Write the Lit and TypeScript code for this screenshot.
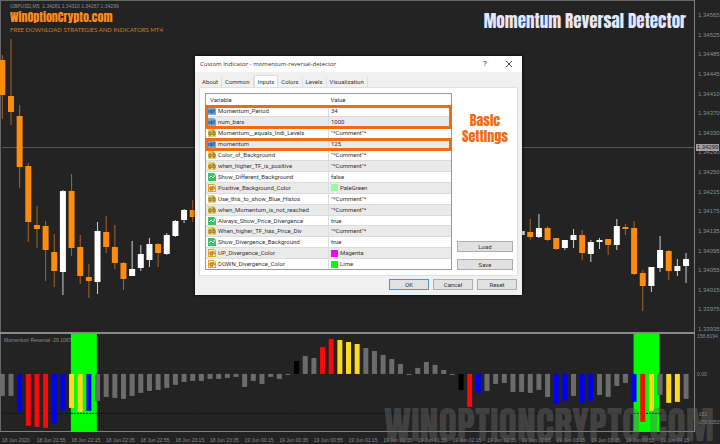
import { LitElement, html, svg, css } from "lit";
import { customElement } from "lit/decorators.js";

type Candle = [number, number, number, number, number, "o" | "w"];

// index, wick top, body top, body bottom, wick bottom, colour
const CANDLES: Candle[] = [
  [0, 55, 60, 95, 119, "o"], [1, 39, 96, 112, 125, "o"], [2, 105, 116, 167, 188, "o"],
  [3, 163, 166, 222, 242, "o"], [4, 206, 225, 229, 248, "o"], [5, 221, 226, 250, 281, "o"],
  [6, 234, 252, 271, 287, "o"], [7, 190, 191, 272, 295, "w"], [8, 174, 191, 248, 256, "o"],
  [9, 235, 247, 276, 284, "o"], [10, 264, 277, 281, 298, "o"], [11, 222, 231, 282, 294, "w"],
  [12, 216, 232, 247, 253, "o"], [13, 225, 247, 263, 269, "o"], [14, 262, 263, 279, 290, "o"],
  [15, 241, 269, 276, 276, "w"], [16, 245, 254, 268, 271, "w"], [17, 238, 244, 260, 267, "w"],
  [18, 243, 244, 253, 267, "o"], [19, 233, 235, 254, 255, "w"], [20, 220, 221, 236, 237, "w"],
  [21, 209, 210, 220, 223, "w"], [22, 200, 210, 217, 222, "o"],
  [60, 231, 231, 235, 235, "w"], [61, 219, 232, 237, 240, "o"], [62, 214, 228, 237, 238, "w"],
  [63, 226, 228, 240, 241, "o"], [64, 238, 238, 249, 250, "o"], [65, 240, 240, 248, 250, "w"],
  [66, 229, 235, 240, 248, "w"], [67, 230, 235, 253, 260, "o"], [68, 240, 242, 254, 262, "w"],
  [69, 238, 240, 242, 249, "w"], [70, 239, 239, 245, 255, "o"], [71, 219, 226, 245, 250, "w"],
  [72, 224, 227, 229, 235, "o"], [73, 221, 228, 274, 275, "o"], [74, 270, 273, 286, 311, "o"],
  [75, 267, 267, 286, 292, "w"], [76, 236, 250, 268, 272, "w"], [77, 250, 251, 271, 280, "o"],
  [78, 259, 266, 271, 276, "w"], [79, 253, 259, 266, 283, "w"],
];

// histogram heights, positive is below the zero line
const HISTO =
  "g22 g22 b38 r52 r53 r54 b50 b37 y34 y38 b37 g27 g23 g24 g25 g22 g19 g17 g16 g14 g11 g8 g7 g7 g5 g5 g4 g3 g13 g7 g10 g3 g5 g1 k-13 g-18 g-16 r-27 r-35 y-34 y-32 y-30 g-26 g-23 g-19 g-15 g-10 g1 g-6 g-12 g-9 g-4 g1 k16 r33 b19 g17 g10 g9 g18 g18 g19 g16 g23 b30 b27 g22 b29 b27 g21 g23 g12 g9 b28 r48 y37 g21 y29 y28 g25"
    .split(" ");

const PRICES = "1.34565 1.34525 1.34485 1.34445 1.34410 1.34370 1.34330 1.34290 1.34250 1.34215 1.34175 1.34135 1.34095 1.34055 1.34015 1.33975 1.33935".split(" ");

const TIMES = [
  "18 Jun 2020", "18 Jun 21:55", "18 Jun 22:15", "18 Jun 22:35", "18 Jun 22:55",
  "18 Jun 23:15", "18 Jun 23:35", "19 Jun 00:15", "19 Jun 00:35", "19 Jun 00:55",
  "19 Jun 01:15", "19 Jun 01:35", "19 Jun 01:55", "19 Jun 02:15", "19 Jun 02:35",
  "19 Jun 02:55", "19 Jun 03:15", "19 Jun 03:35", "19 Jun 03:55", "19 Jun 04:15",
];

const barX = (i: number) => 11 + (i - 1) * 8.667;

@customElement("price-chart")
export class PriceChart extends LitElement {
  static styles = css`
    :host { display: block; }
    svg { display: block; width: 100%; height: 100%; }
    .o { fill: #ff8c0a; }
    .w { fill: #ffffff; }
    .wick.o { fill: #a8642a; }
    .wick.w { fill: #d0d0d0; }
    .level { fill: #585858; }
  `;
  render() {
    return html`<svg viewBox="0 0 695 332" preserveAspectRatio="none" aria-hidden="true">
      <rect class="level" x="2" y="147" width="693" height="1"></rect>
      ${CANDLES.map(([i, wt, bt, bb, wb, c]) => {
        const x = barX(i);
        return svg`<rect class="wick ${c}" x=${x - 0.5} y=${wt} width="1" height=${wb - wt}></rect>
          <rect class=${c} x=${x - 3} y=${bt} width="6" height=${bb - bt}></rect>`;
      })}
    </svg>`;
  }
}

@customElement("momentum-chart")
export class MomentumChart extends LitElement {
  static styles = css`
    :host { display: block; }
    svg { display: block; width: 100%; height: 100%; }
    .g { fill: #6c6c6c; }
    .b { fill: #0000f5; }
    .r { fill: #fa0a0a; }
    .y { fill: #ffd91a; }
    .k { fill: #000000; }
    .zone { fill: #00ff00; }
    .dots { stroke: #111111; stroke-width: 1; stroke-dasharray: 2 1; }
  `;
  render() {
    return html`<svg viewBox="0 0 695 98" preserveAspectRatio="none" aria-hidden="true">
      <rect class="zone" x="71" y="0" width="26" height="98"></rect>
      <rect class="zone" x="634.5" y="0" width="26" height="98"></rect>
      <line class="dots" x1="2" x2="695" y1="79.5" y2="79.5"></line>
      ${HISTO.map((d, i) => {
        const v = Number(d.slice(1));
        return svg`<rect class=${d[0]} x=${barX(i) - 2.5} y=${40 + Math.min(v, 0)} width="5" height=${Math.abs(v)}></rect>`;
      })}
    </svg>`;
  }
}

type Kind = "int" | "str" | "bool" | "color";
type Row = [Kind, string, string, string?];

const GROUPS: { marked: boolean; rows: Row[] }[] = [
  { marked: true, rows: [["int", "Momentum_Period", "34"], ["int", "num_bars", "1000"]] },
  { marked: false, rows: [["str", "Momentum__equals_Indi_Levels", '"*Comment"*']] },
  { marked: true, rows: [["int", "momentum", "125"]] },
  {
    marked: false,
    rows: [
      ["str", "Color_of_Background", '"*Comment"*'],
      ["str", "when_higher_TF_is_positive", '"*Comment"*'],
      ["bool", "Show_Different_Background", "false"],
      ["color", "Positive_Background_Color", "PaleGreen", "#98fb98"],
      ["str", "Use_this_to_show_Blue_Histos", '"*Comment"*'],
      ["str", "when_Momentum_is_not_reached", '"*Comment"*'],
      ["bool", "Always_Show_Price_Divergence", "true"],
      ["str", "When_higher_TF_has_Price_Div", '"*Comment"*'],
      ["bool", "Show_Divergence_Background", "true"],
      ["color", "UP_Divergence_Color", "Magenta", "#ff00ff"],
      ["color", "DOWN_Divergence_Color", "Lime", "#00ff00"],
    ],
  },
];

@customElement("settings-dialog")
export class SettingsDialog extends LitElement {
  static styles = css`
    :host {
      display: block;
      box-sizing: border-box;
      background: #f0f0f0;
      color: #333;
      font: 6px/8px Roboto, "Liberation Sans", sans-serif;
      box-shadow: 0 0 3px #000;
    }
    button { font: inherit; color: inherit; margin: 0; padding: 0; border: 0; background: none; }
    .title { display: flex; align-items: center; height: 16px; padding: 0 5px; background: #fff; }
    .title h2 { flex: 1; margin: 0; font: 6px/8px "Open Sans", sans-serif; }
    .title button { width: 24px; height: 16px; display: grid; place-items: center; font-size: 8px; }
    .title button:last-child { margin-right: -4px; }
    .close { width: 6px; height: 6px; stroke: #444; fill: none; }
    .tabs { display: flex; align-items: flex-end; height: 15px; padding: 0 4px; }
    .tabs button { height: 10px; padding: 0 3px; border-right: 1px solid #ddd; }
    .tabs .active { height: 12px; background: #fff; border: 1px solid #ddd; border-bottom: 0; }
    .panel { display: flex; margin: 0 4px; padding: 5px 4px 5px 5px; background: #fff; border: 1px solid #e0e0e0; gap: 5px; }
    .box { flex: 1; border: 1px solid #9a9a9a; }
    table { width: 100%; height: 175px; border-collapse: collapse; table-layout: fixed; }
    .name { width: 50%; }
    th, td { box-sizing: border-box; padding: 0 0 0 2px; text-align: left; font-weight: 400; white-space: nowrap; line-height: 8px; }
    th { padding-left: 4px; height: 12px; }
    th + th { padding-left: 2px; }
    td { border-top: 1px solid #dcdcdc; }
    td + td { border-left: 1px solid #dcdcdc; }
    .odd { background: #eaeaea; }
    .marked { outline: 3px solid #f26a12; outline-offset: -2px; }
    .cell { display: flex; align-items: center; gap: 2px; }
    .icon { width: 8px; height: 8px; flex: none; }
    .int { fill: #6aaade; }
    .str { fill: #e6cf6c; }
    .bool { fill: #35c46a; }
    .color { fill: #e0a72a; }
    .paper { fill: #f6efd2; }
    .mark { fill: none; stroke: #1d4f86; stroke-width: 1; }
    .mark.str { stroke: #8a6d10; fill: none; }
    .mark.bool { stroke: #ffffff; fill: none; }
    .mark.color { stroke: #b56a08; fill: #ffb020; }
    .mark.int { fill: none; }
    .swatch { width: 7px; height: 7px; }
    .side { width: 56px; display: flex; flex-direction: column; gap: 7px; }
    .note {
      margin: 20px 0 auto;
      color: #f26a12;
      text-align: center;
      font: 400 14px/16px Impact, Anton, "Roboto Condensed", Roboto, sans-serif;
    }
    .push { height: 11px; background: #e1e1e1; border: 1px solid #adadad; }
    .footer { display: flex; justify-content: flex-end; gap: 4px; padding: 3px 5px 5px; }
    .footer .push { width: 40px; }
    .footer .ok { border: 1px solid #0f6cbd; outline: 1px solid #4f94d0; outline-offset: -1px; }
  `;

  private icon(kind: Kind) {
    const marks = {
      int: "M1 3v3M3 3h1v3h-1zM6 2v4",
      str: "M1 3h2v3h-2zM5 1v5h2v-3h-2",
      bool: "M1 5l2-2 2 2 2-3",
      color: "M2 3h3v3h-3zM5 2l2 3",
    };
    return html`<svg class="icon" viewBox="0 0 8 8" aria-hidden="true">
      <path class=${kind} d="M0 0h6l2 2v6h-8z"></path>
      ${kind === "color" ? svg`<path class="paper" d="M1 1h5l1 1v5h-6z"></path>` : ""}
      <path class="mark ${kind}" d=${marks[kind]}></path>
    </svg>`;
  }

  render() {
    let n = 0;
    return html`
      <div class="title">
        <h2>Custom Indicator - momentum-reversal-detector</h2>
        <button aria-label="Help">?</button>
        <button aria-label="Close"><svg class="close" viewBox="0 0 6 6"><path d="M0 0l6 6M6 0l-6 6"></path></svg></button>
      </div>
      <div class="tabs" role="tablist">
        ${["About", "Common", "Inputs", "Colors", "Levels", "Visualization"].map(
          (t) => html`<button role="tab" class=${t === "Inputs" ? "active" : ""}>${t}</button>`
        )}
      </div>
      <div class="panel">
        <div class="box">
          <table>
            <thead><tr><th class="name">Variable</th><th>Value</th></tr></thead>
            ${GROUPS.map((g) => html`<tbody class=${g.marked ? "marked" : ""}>
              ${g.rows.map(([kind, name, value, color]) => html`<tr class=${n++ % 2 ? "odd" : ""}>
                <td><div class="cell">${this.icon(kind)}${name}</div></td>
                <td><div class="cell">${color ? html`<span class="swatch" style="background:${color}"></span>` : ""}${value}</div></td>
              </tr>`)}
            </tbody>`)}
          </table>
        </div>
        <div class="side">
          <p class="note">Basic<br>Settings</p>
          <button class="push">Load</button>
          <button class="push">Save</button>
        </div>
      </div>
      <div class="footer">
        <button class="push ok">OK</button>
        <button class="push">Cancel</button>
        <button class="push">Reset</button>
      </div>`;
  }
}

@customElement("app-root")
export class AppRoot extends LitElement {
  static styles = css`
    :host {
      display: grid;
      position: relative;
      box-sizing: border-box;
      min-height: 100vh;
      grid-template-columns: minmax(0, 1fr) 25px;
      grid-template-rows: 332px 100px 12px;
      background: #232323;
      color: #8c8c8c;
      font: 5px/8px "Liberation Sans", sans-serif;
      overflow: hidden;
    }
    .main, .sub { display: grid; border-right: 1px solid #808080; }
    .main > *, .sub > * { grid-area: 1 / 1; min-width: 0; }
    .main { box-shadow: inset 2px 2px 0 -1px #666; }
    .sub { border-top: 2px solid #8a8a8a; border-bottom: 1px solid #808080; box-shadow: inset 2px 0 0 -1px #666; }
    .heads { display: flex; justify-content: space-between; align-items: flex-start; padding: 2px 8px 0 10px; }
    .quote { margin: 0; line-height: 8px; }
    .site, h1, .watermark { font-family: Impact, Anton, "Roboto Condensed", Roboto, sans-serif; font-weight: 400; white-space: nowrap; }
    .site { display: block; color: #ff8c1a; text-decoration: none; font-size: 12px; line-height: 14px; }
    .tag { margin: 2px 0 0; color: #d07a2c; font: 6px/8px Lato, sans-serif; }
    h1 { margin: 9px 0 0; color: #e6e6fa; font-size: 17px; line-height: 20px; }
    .prices { display: flex; flex-direction: column; justify-content: space-between; padding: 11px 0 0 3px; margin-bottom: -1px; font-size: 6px; }
    .levels { display: grid; grid-template-rows: 10px 28px 8px 32px 8px 1fr; padding-left: 2px; }
    .now { position: absolute; right: 1px; top: 144px; width: 23px; background: #a0a0a0; color: #222; text-align: center; font-size: 6px; line-height: 7px; }
    .name { padding: 2px 4px; }
    .times { display: grid; grid-template-columns: repeat(20, minmax(0, 1fr)); padding: 4px 0 0 2px; white-space: nowrap; }
    .watermark { position: absolute; right: 6px; bottom: 0; color: rgba(110, 110, 110, 0.42); font-size: 38px; line-height: 38px; }
    settings-dialog { position: absolute; left: 195px; top: 56px; width: 327px; }
  `;

  render() {
    return html`
      <section class="main">
        <price-chart></price-chart>
        <div class="heads">
          <div>
            <p class="quote">GBPUSD,M5&nbsp; 1.34281 1.34310 1.34267 1.34299</p>
            <a class="site" href="#">WinOptionCrypto.com</a>
            <p class="tag">FREE DOWNLOAD STRATEGIES AND INDICATORS MT4</p>
          </div>
          <h1>Momentum Reversal Detector</h1>
        </div>
      </section>
      <div class="prices">${PRICES.map((p) => html`<span>${p}</span>`)}</div>
      <section class="sub">
        <momentum-chart></momentum-chart>
        <div class="name">Momentum Reversal -29.1067</div>
      </section>
      <div class="levels"><span>158.8194</span><span></span><span>0.00</span><span></span><span>-151</span><span>-178.5053</span></div>
      <div class="times">${TIMES.map((t) => html`<span>${t}</span>`)}</div>
      <div class="now">1.34299</div>
      <settings-dialog></settings-dialog>
      <div class="watermark">WINOPTIONCRYPTO.COM</div>
    `;
  }
}
